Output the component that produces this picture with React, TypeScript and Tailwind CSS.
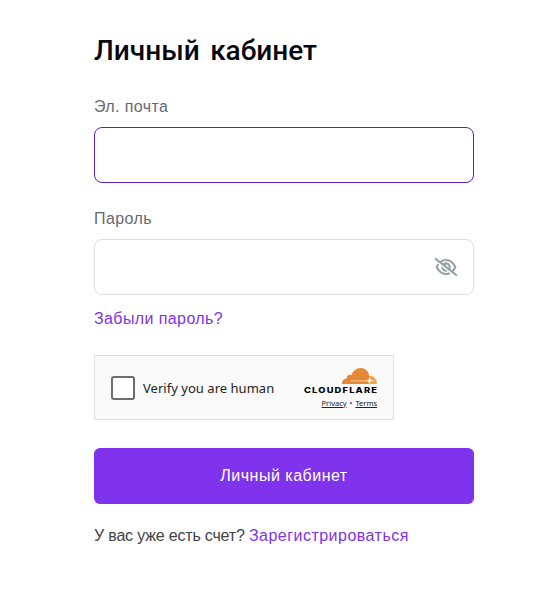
import { useState } from 'react';
import type { FormEvent } from 'react';
import { FaRegEye, FaRegEyeSlash } from 'react-icons/fa6';

function CloudflareLogo() {
  return (
    <svg viewBox="0 0 74 28" width="74" height="28" role="img" aria-label="Cloudflare">
      <path
        fill="#f1a94b"
        d="M64.5 7.8c4.9-.6 8.500 3 8.500 8.200H61.500l1.500-3.6z"
      />
      <path
        fill="#e68835"
        d="M38 16c-.2-3.2 1.800-5.400 4.700-5.600-.4-2.800 2.300-4.500 4.700-3.200C48.900 2.900 52.400 0 56.500 0c4.400 0 7.900 2.900 8.600 7.400L64.900 14.500 64 16z"
      />
      <path fill="#f7dfc6" d="M46.500 12.500h17v.8h-17z" />
      <path fill="#fafafa" d="M62.500 12.400l2-.3.900-2.900 1.100 2.900 3.500.6-3.500.9-1.100 2.400-1-2.400z" />
      <text
        y="24.800"
        transform="scale(1.19 1)"
        textLength="61.300"
        lengthAdjust="spacing"
        className="fill-black font-['Inter',sans-serif] text-[7.800px] font-extrabold"
      >
        CLOUDFLARE
      </text>
    </svg>
  );
}

function Captcha() {
  const [checked, setChecked] = useState(false);

  return (
    <div className="mt-6 flex h-[65px] w-[300px] items-center border border-[#e0e0e0] bg-[#fafafa] pr-[15px] pl-4 font-['Noto_Sans',sans-serif] text-[#232323]">
      <label className="flex items-center gap-2 text-[13px] leading-6">
        <input
          type="checkbox"
          checked={checked}
          onChange={(e) => setChecked(e.target.checked)}
          className="h-6 w-6 appearance-none rounded-[3px] border-2 border-[#6d6d6d] bg-white checked:bg-[#6d6d6d]"
        />
        <span className="tracking-[0.030px] whitespace-nowrap">Verify you are human</span>
      </label>
      <div className="ml-auto flex flex-col items-end">
        <CloudflareLogo />
        <div className="mt-0.5 mr-px flex gap-[3px] text-[7.500px] leading-[10px] whitespace-nowrap">
          <a href="#privacy" className="underline">Privacy</a>
          <span>•</span>
          <a href="#terms" className="underline">Terms</a>
        </div>
      </div>
    </div>
  );
}

export default function App() {
  const [email, setEmail] = useState('');
  const [password, setPassword] = useState('');
  const [showPassword, setShowPassword] = useState(false);

  function handleSubmit(e: FormEvent) {
    e.preventDefault();
  }

  return (
    <div className="min-h-screen bg-white pt-[31px] pl-[94px] font-['Liberation_Sans',Arial,sans-serif] text-base leading-6">
      <form onSubmit={handleSubmit} className="w-[380px]">
        <h1 className="font-['Roboto',sans-serif] text-[28px] leading-10 font-medium [word-spacing:3.500px] text-[#07070f]">
          Личный кабинет
        </h1>

        {/* Email */}
        <label htmlFor="email" className="mt-6 block tracking-[0.400px] text-[#66696f]">
          Эл. почта
        </label>
        <input
          id="email"
          type="email"
          value={email}
          onChange={(e) => setEmail(e.target.value)}
          className="mt-2 block h-14 w-full rounded-lg border border-[#5b1fc4] px-4 outline-none"
        />

        {/* Password */}
        <label htmlFor="password" className="mt-6 block tracking-[0.400px] text-[#66696f]">
          Пароль
        </label>
        <div className="mt-2 flex h-14 items-center rounded-lg border border-[#dcdde0] pr-[15px] pl-4">
          <input
            id="password"
            type={showPassword ? 'text' : 'password'}
            value={password}
            onChange={(e) => setPassword(e.target.value)}
            className="min-w-0 flex-1 outline-none"
          />
          <button
            type="button"
            aria-label="Показать пароль"
            onClick={() => setShowPassword(!showPassword)}
            className="text-[#939ea5]"
          >
            {showPassword ? (
              <FaRegEye className="h-[18px] w-6" />
            ) : (
              <FaRegEyeSlash className="h-[18px] w-6 stroke-[12]" />
            )}
          </button>
        </div>

        <a href="#reset" className="mt-3 block tracking-[0.400px] text-[#7f33ec]">
          Забыли пароль?
        </a>

        <Captcha />

        <button type="submit" className="mt-7 block h-14 w-full rounded-md bg-[#7f33ec] tracking-[0.500px] text-white">
          Личный кабинет
        </button>

        <p className="mt-5 tracking-[-0.180px] whitespace-nowrap text-[#3f4247]">
          У вас уже есть счет?{' '}
          <a href="#register" className="tracking-[0.480px] text-[#7f33ec]">Зарегистрироваться</a>
        </p>
      </form>
    </div>
  );
}
